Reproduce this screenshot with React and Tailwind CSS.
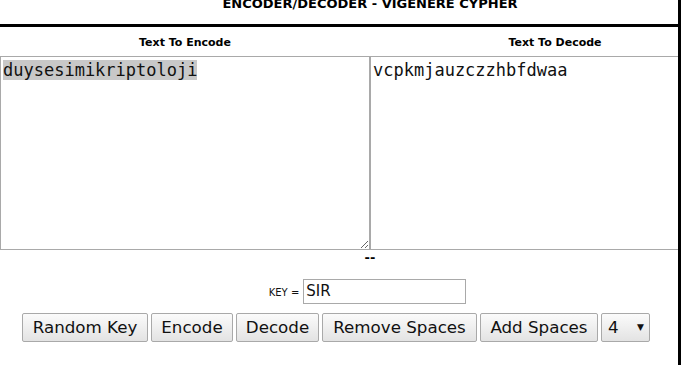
import React from "react";

const sans = "font-['DejaVu_Sans',sans-serif]";
const mono = "font-['DejaVu_Sans_Mono',monospace]";

function Btn({ w, children }) {
  return (
    <div
      className={`${sans} ${w} h-[29px] shrink-0 flex items-center justify-center rounded-[2px] border border-[#a9a9a9] bg-gradient-to-b from-[#fbfbfb] to-[#e3e3e3] text-[16.7px] text-[#111] leading-none`}
    >
      {children}
    </div>
  );
}

export default function App() {
  return (
    <div className="flex w-[681px] h-[365px] overflow-hidden bg-white">
      <div className="w-[678px] shrink-0 overflow-hidden">
        <div className="w-[740px]">
          <div className="h-[24px] overflow-hidden flex flex-col">
            <p className={`${sans} -mt-[4px] text-center text-[13px] leading-[15px] font-bold text-black`}>
              ENCODER/DECODER - VIGENERE CYPHER
            </p>
          </div>
          <div className="border-t-[3px] border-black">
            <div className="grid grid-cols-2 h-[29px] pt-[9px]">
              <div className={`${sans} text-center text-[11px] leading-[13px] font-bold text-black`}>Text To Encode</div>
              <div className={`${sans} text-center text-[11px] leading-[13px] font-bold text-black`}>Text To Decode</div>
            </div>
            <div className="grid grid-cols-2 h-[194px]">
              <div className={`${mono} resize overflow-auto border border-[#a9a9a9] pt-[4px] pl-[2px] text-[17px] leading-[19px] text-[#111]`}>
                <span className="bg-[#c8c8c8]">duysesimikriptoloji</span>
              </div>
              <div className={`${mono} border border-[#a9a9a9] pt-[4px] pl-[2px] text-[17px] leading-[19px] text-[#111]`}>
                vcpkmjauzczzhbfdwaa
              </div>
            </div>
          </div>
          <div className={`${sans} text-center text-[13px] leading-[15px] font-bold text-black`}>--</div>
          <div className="mt-[14px] flex items-baseline justify-center gap-[4px] pr-[5px]">
            <span className={`${sans} text-[10px] text-[#111]`}>KEY =</span>
            <div className={`${sans} w-[163px] h-[25px] border border-[#a9a9a9] pl-[2px] text-[15px] leading-[23px] text-[#111]`}>
              SIR
            </div>
          </div>
        </div>
        <div className="mt-[9px] pl-[22px] flex gap-[3px]">
          <Btn w="w-[126px]">Random Key</Btn>
          <Btn w="w-[82px]">Encode</Btn>
          <Btn w="w-[83px]">Decode</Btn>
          <Btn w="w-[155px]">Remove Spaces</Btn>
          <Btn w="w-[118px]">Add Spaces</Btn>
          <div
            className={`${sans} w-[49px] h-[29px] shrink-0 flex items-center justify-between pl-[6px] pr-[5px] rounded-[2px] border border-[#a9a9a9] bg-gradient-to-b from-[#fbfbfb] to-[#e3e3e3] text-[16.7px] text-[#111] leading-none`}
          >
            <span>4</span>
            <span className="text-[9px]">▼</span>
          </div>
        </div>
      </div>
      <div className="w-[3px] shrink-0 bg-black" />
    </div>
  );
}
